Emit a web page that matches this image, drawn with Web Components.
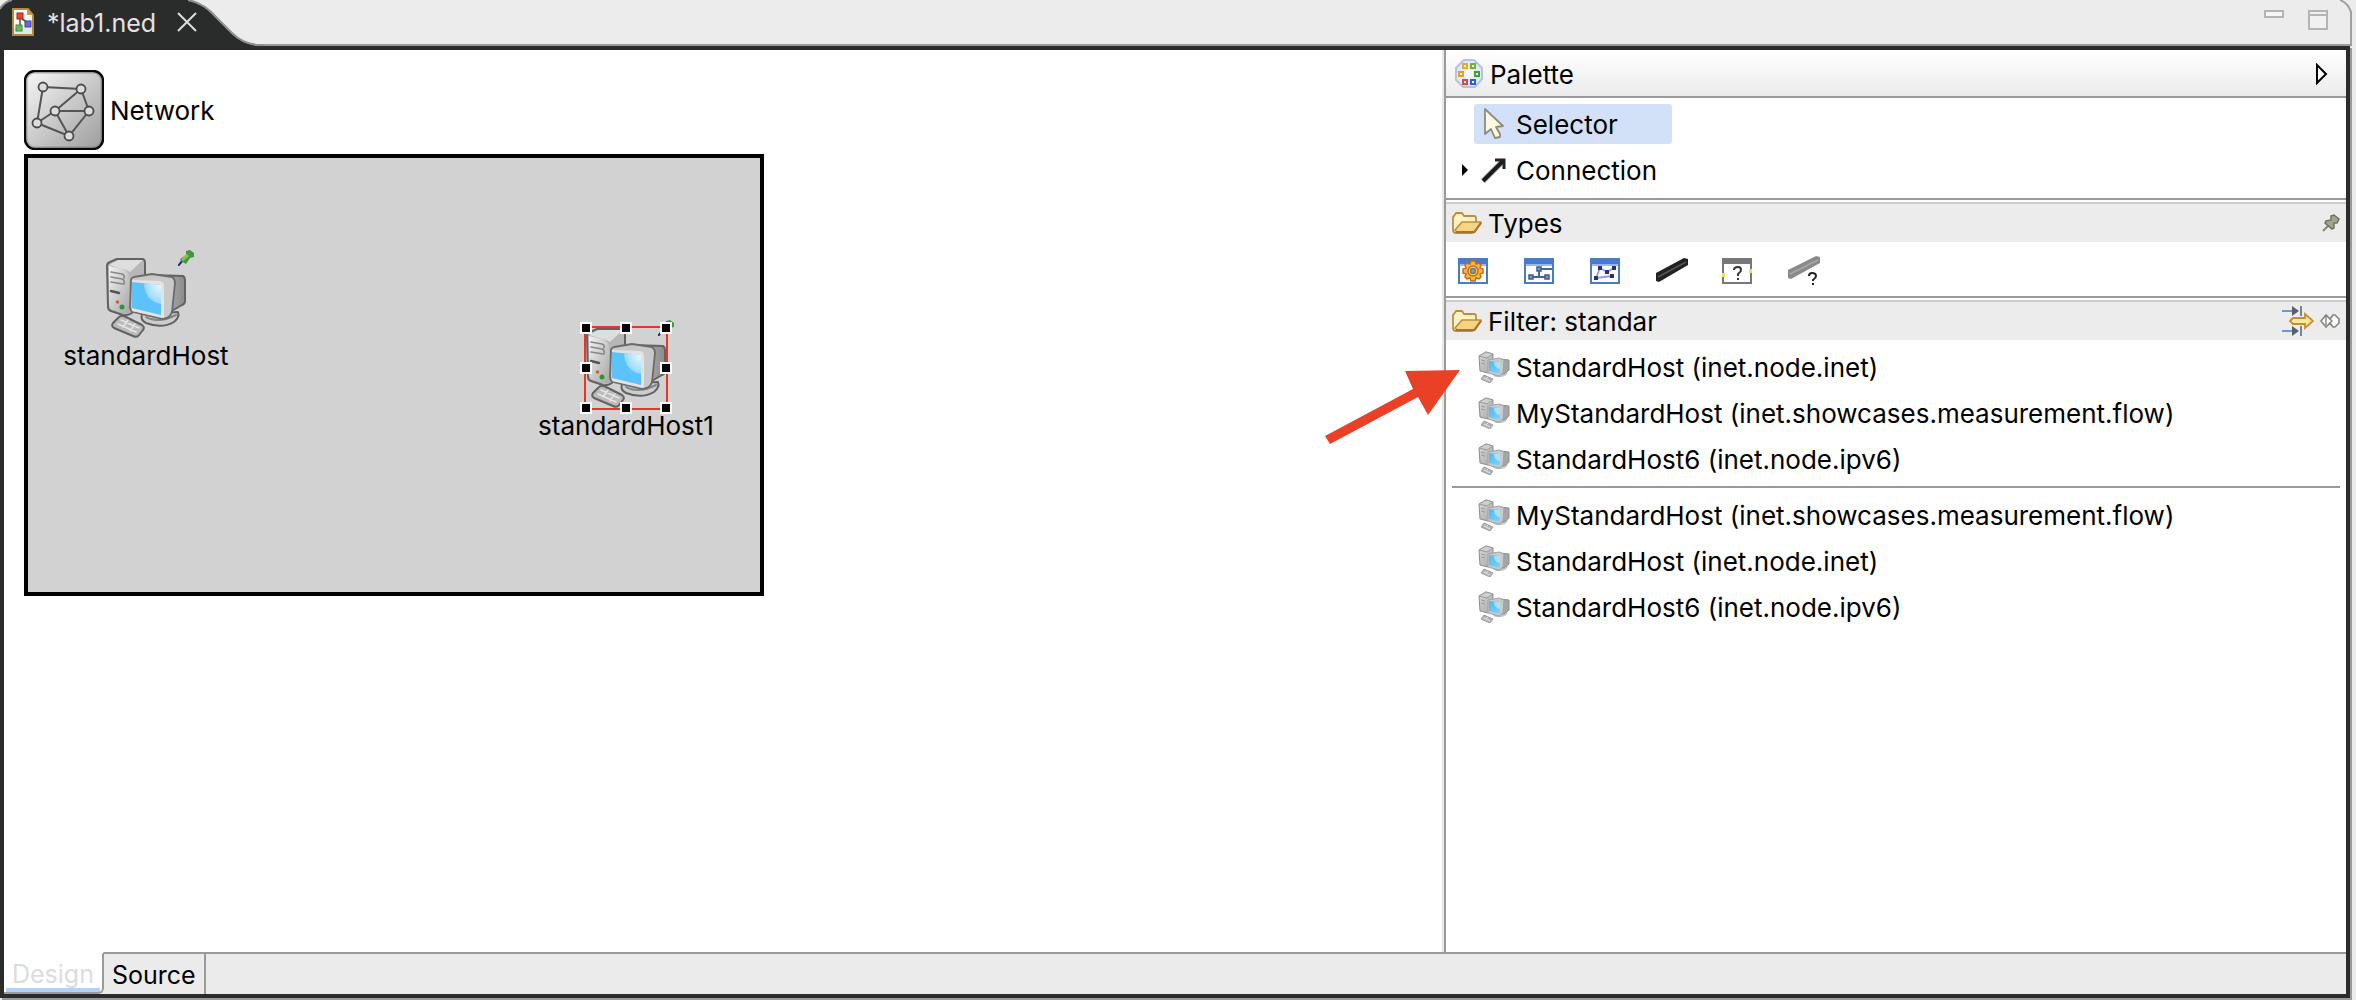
<!DOCTYPE html>
<html lang="en">
<head>
<meta charset="utf-8">
<title>lab1.ned</title>
<style>
html,body{margin:0;height:100%}
body{background:#ececec;font-family:Inter,"Liberation Sans",sans-serif;font-size:26px;line-height:32px;color:#000}
</style>
</head>
<body>
<ned-editor></ned-editor>
<script>
const computer = `
<defs>
<linearGradient id="f" x1="0" y1="0" x2="1" y2="1"><stop offset="0" stop-color="#f2f2f2"/><stop offset="1" stop-color="#a8a8a8"/></linearGradient>
<linearGradient id="s" x1="0" y1="0" x2="1" y2="0"><stop offset="0" stop-color="#c8c8c8"/><stop offset="1" stop-color="#8b8b8b"/></linearGradient>
<radialGradient id="g" cx="1" cy="0" r="1"><stop offset="0" stop-color="#f2fbff"/><stop offset="1" stop-color="#96d9fc"/></radialGradient>
</defs>
<g stroke-linejoin="round" stroke-linecap="round">
<path d="M1 8Q1 5 4 4L11 1H36Q39 1 39 5V20L26 55Q22 58 17 57L5 53Q2 52 2 49Z" fill="#b7b7b7" stroke="#626262" stroke-width="2"/>
<path d="M3 7L12 2H37L24 14Q20 11 16 11Z" fill="#dedede"/>
<path d="M3 8L16 11Q23 13 23 20V55L17 55L5 51L3 47Z" fill="url(#f)"/>
<path d="M5 14L16 16Q19 17 18 20M5 19L16 21Q19 22 18 26M5 24L17 26" fill="none" stroke="#888" stroke-width="1.6"/>
<path d="M5 33L13 35" stroke="#555" stroke-width="2.5"/>
<circle cx="11.500" cy="44" r="1.800" fill="#c5653c"/><circle cx="16" cy="49" r="2.500" fill="#329332"/>
<path d="M36 56Q34 62 40 65Q56 71 68 64Q74 59 72 54Z" fill="#cdcdcd" stroke="#626262" stroke-width="2"/>
<path d="M40 59Q52 66 70 57" fill="none" stroke="#858585" stroke-width="2"/>
<path d="M44 17L77 18Q79 19 79 22V43Q79 46 76 47L64 54Z" fill="url(#s)" stroke="#626262" stroke-width="2"/>
<path d="M25 22Q25 20 28 19L46 16L66 19Q69 21 69 25L66 54Q65 58 61 60L56 61L27 54Q24 53 24 49Z" fill="#c9c9c9" stroke="#6b6b6b" stroke-width="1.800"/>
<path d="M26 22L54 23Q58 24 58 28V60L26 53Z" fill="#e3e3e3"/>
<path d="M26 24L55 27V57L26 50Z" fill="#5cc3fa"/>
<path d="M38 25L55 27V46Q39 43 38 25Z" fill="url(#g)"/>
<path d="M12 60Q14 57 18 58L36 67Q39 69 37 72L33 77Q31 80 27 78L8 70Q5 68 7 65Z" fill="#bbb" stroke="#626262" stroke-width="2"/>
<path d="M12 66L30 74M15 62L33 70M17 69L22 62M24 73L29 66" stroke="#e6e6e6" stroke-width="1.500"/>
</g>`;
const smallComputer = `
<defs>
<linearGradient id="t" x1="0" y1="0" x2="1" y2="1"><stop offset="0" stop-color="#dcdcdc"/><stop offset="1" stop-color="#a4a4a4"/></linearGradient>
<linearGradient id="c" x1="0" y1="0" x2="1" y2="1"><stop offset="0" stop-color="#4fb8f2"/><stop offset="1" stop-color="#7fd4fb"/></linearGradient>
</defs>
<g stroke-linejoin="round">
<path d="M1 5L8 1L15 3V9L10 22L2 20Z" fill="url(#t)" stroke="#8d8d8d"/>
<path d="M1 5L8 1L15 3L9 7Z" fill="#cfcfcf" stroke="#9a9a9a"/>
<path d="M3 9L7 10M3 12L7 13" stroke="#999"/>
<path d="M14 22Q16 27 25 25Q29 24 29 21Z" fill="#d3d3d3" stroke="#b5b5b5"/>
<path d="M22 8L31 9V19L26 23H20Z" fill="#a6a6a6" stroke="#8f8f8f"/>
<path d="M10 9L21 7L26 9L25 22L21 25L10 22Z" fill="#cacaca" stroke="#a2a2a2"/>
<path d="M11 10L22 11V23L11 20Z" fill="url(#c)"/>
<path d="M16 11L22 11V18Q16 17 16 11Z" fill="#c4ebfd" opacity=".7"/>
<path d="M6 24L15 28L12 32L3 28Z" fill="#b4b4b4" stroke="#a0a0a0"/>
<path d="M6 27L12 30M8 28L10 26" stroke="#e2e2e2"/>
</g>`;
const folder = `<path d="M2 5L4 2H10L12 5H22Q24 5 24 7V12H29L23 20Q22 22 20 22H4Q1 22 1 19V6Z" fill="#fdf2c0" stroke="#be8d43" stroke-width="1.800" stroke-linejoin="round"/><path d="M3 19L10 11H29L23 21H5Z" fill="#f5d482" stroke="#be8d43" stroke-width="1.600" stroke-linejoin="round"/><path d="M29 12L22 21H4" fill="none" stroke="#a97231" stroke-width="2"/>`;
const blueWin = `<rect x="1" y="1" width="28" height="24" fill="#fdfdff" stroke="#4a7cc0" stroke-width="2"/><rect x="2" y="2" width="26" height="4" fill="#4a78d2"/><path d="M2 7H28" stroke="#9bb8e8" stroke-width="2"/>`;
const icons = {
computer:[80,80,computer],
host:[32,32,smallComputer],
file:[22,28,`<path d="M1 1H16L21 7V27H1Z" fill="#fdfbf2" stroke="#b5893a" stroke-width="2"/><path d="M15 1L21 7H15Z" fill="#c89b49"/><rect x="2" y="20" width="18" height="6" fill="#dfe7f7"/><path d="M8 10V18M10 11L15 14" stroke="#555" stroke-width="1.500"/><rect x="5" y="5" width="6" height="6" fill="#e4473a" stroke="#a2241d"/><rect x="13" y="13" width="6" height="6" fill="#6868e0" stroke="#3c3ca5"/><rect x="4" y="17" width="6" height="6" fill="#68bd63" stroke="#398c3a"/>`],
close:[20,20,`<path d="M1 1L19 19M19 1L1 19" stroke="#ddd" stroke-width="2"/>`],
min:[20,8,`<rect x="1" y="1" width="18" height="6" fill="#f6f6f6" stroke="#b4b4b4" stroke-width="2"/>`],
max:[20,20,`<path d="M1 1H19V19H1ZM1 5H19" fill="#f1f1f1" stroke="#b4b4b4" stroke-width="2"/>`],
network:[80,80,`<defs><linearGradient id="n" x1="0" y1="0" x2="1" y2="1"><stop offset="0" stop-color="#f8f8f8"/><stop offset="1" stop-color="#9c9c9c"/></linearGradient></defs><rect x="1" y="1" width="78" height="78" rx="10" fill="url(#n)" stroke="#080808" stroke-width="2.500"/><rect x="3" y="3" width="74" height="74" rx="8" fill="none" stroke="#777" stroke-opacity=".4" stroke-width="1.500"/><path d="M19 17L57 19L65 41L45 66L13 53L19 17M57 19L31 41L65 41M31 41L13 53M31 41L45 66" fill="none" stroke="#555" stroke-width="2"/><g fill="#ddd" stroke="#4c4c4c" stroke-width="1.800"><circle cx="19" cy="17" r="4.500"/><circle cx="57" cy="19" r="4.500"/><circle cx="65" cy="41" r="4.500"/><circle cx="31" cy="41" r="4.500"/><circle cx="13" cy="53" r="4.500"/><circle cx="45" cy="66" r="4.500"/></g>`],
greenpin:[16,16,`<path d="M0 16L5 10" stroke="#1b2f70" stroke-width="2"/><path d="M8 1L12 0L16 3V7L12 8L8 14L3 11L2 9L8 5Z" fill="#3e9a3f"/><path d="M4 10L10 5" stroke="#93ba58" stroke-width="3"/>`],
palette:[30,30,`<path d="M10 1H20L28 9V20L21 28H9L2 21V9Z" fill="#e3eaf6" stroke="#b4c3e1" stroke-width="2" stroke-linejoin="round"/><circle cx="15" cy="15" r="5" fill="#f6f8fc"/><g fill="#fff" stroke-width="2"><rect x="9" y="5" width="4" height="4" stroke="#efa928"/><rect x="17" y="5" width="4" height="4" stroke="#6fb33a"/><rect x="5" y="13" width="4" height="4" stroke="#ee9a24"/><rect x="21" y="13" width="4" height="4" stroke="#3aa233"/><rect x="9" y="21" width="4" height="4" stroke="#d1484d"/><rect x="17" y="21" width="4" height="4" stroke="#2b5fe0"/></g>`],
tri:[12,22,`<path d="M1 2V20L10 11Z" fill="#fff" stroke="#000" stroke-width="2"/>`],
cursor:[22,32,`<path d="M2 1V26L8 21L12 30L17 29L17 26L13 19L20 18Z" fill="#fdf9e0" stroke="#8d8a7c" stroke-width="1.800" stroke-linejoin="round"/>`],
conn:[26,26,`<path d="M2 24L21 5" stroke="#555" stroke-opacity=".35" stroke-width="6"/><path d="M2 24L22 4" stroke="#1b1b1b" stroke-width="4"/><path d="M14 3H23V12" fill="none" stroke="#222" stroke-width="3"/>`],
expand:[6,12,`<path d="M0 0L6 6L0 12Z"/>`],
folder:[30,24,folder],
pin:[18,18,`<path d="M1 17L7 11" stroke="#888878" stroke-width="2"/><path d="M9 2L12 1L17 5L15 9L12 9L12 14L10 15L3 9L4 7L9 6Z" fill="#a4a490" stroke="#727268" stroke-width="1.500"/>`],
simple:[30,26,blueWin+`<g transform="translate(15 13)" stroke="#c56a23" stroke-width="1.500" fill="#f7b842"><path d="M-2 -10H2L3 -7L6 -8L8 -6L7 -3L10 -2V2L7 3L8 6L6 8L3 7L2 10H-2L-3 7L-6 8L-8 6L-7 3L-10 2V-2L-7 -3L-8 -6L-6 -8L-3 -7Z"/><circle r="5" fill="#ffe04b"/><circle r="2.500" fill="#999" stroke="#777"/></g>`],
compound:[30,26,blueWin+`<path d="M15 11H28M15 11V19M8 19H22" stroke="#45679f" stroke-width="2" fill="none"/><g fill="#8298bf" stroke="#3d5d94" stroke-width="1.500"><rect x="13" y="9" width="4" height="4"/><rect x="5" y="17" width="4" height="4"/><rect x="21" y="17" width="4" height="4"/></g>`],
net:[30,26,blueWin+`<path d="M6 20L10 10L17 14L24 10M6 20L22 18" stroke="#9696f5" stroke-width="1.800" fill="none"/><g fill="#27336b"><rect x="8" y="8" width="4" height="4"/><rect x="22" y="8" width="4" height="4"/><rect x="15" y="12" width="4" height="4"/><rect x="4" y="18" width="4" height="4"/><rect x="20" y="16" width="4" height="4"/></g>`],
channel:[32,26,`<path d="M0 15L28 0L32 1V7L3 24L0 23Z" fill="#222"/><path d="M2 19L30 4" stroke="#555" stroke-width="1.500"/>`],
iface:[30,26,`<rect x="1" y="1" width="28" height="24" fill="#fff" stroke="#777" stroke-width="2"/><rect x="1" y="1" width="28" height="5" fill="#777"/><path d="M0 15H3V19H0ZM27 11H30V15H27Z" fill="#f2e34b"/><path d="M12 12Q12 9 16 9Q19 9 19 12Q19 14 16 16V18M16 20V22" fill="none" stroke="#333" stroke-width="2"/>`],
chiface:[32,30,`<path d="M0 14L28 0L32 1V7L3 23L0 22Z" fill="#8a8a8a"/><path d="M2 18L30 4" stroke="#aaa" stroke-width="1.500"/><path d="M21 20Q21 17 24 17Q28 17 28 20Q28 22 25 24V25M25 27V29" fill="none" stroke="#222" stroke-width="2"/>`],
filter:[32,32,`<path d="M0 6H12M0 26H12" stroke="#6b9bcc" stroke-width="2"/><path d="M10 1L17 6L10 11ZM10 21L17 26L10 31Z" fill="#566170"/><path d="M19 1V11M19 21V31" stroke="#7883a0" stroke-width="2"/><path d="M8 16L11 13H23V9L31 16L23 23V19H11Z" fill="#ffe9a2" stroke="#c58f2d" stroke-width="1.800"/>`],
unpin:[20,16,`<path d="M1 8L6 2L10 6L13 2H15L19 6V10L15 14H13L10 10L6 14Z" fill="#fbfbfb" stroke="#85857f" stroke-width="1.600"/><path d="M6 4V12M10 6L12 8L10 10" fill="none" stroke="#85857f" stroke-width="1.400"/>`]
};
function define(name, markup, setup){
  customElements.define(name, class extends HTMLElement{
    constructor(){
      super();
      this.attachShadow({mode:"open"}).innerHTML = markup;
    }
    connectedCallback(){ if(setup) setup.call(this, this.shadowRoot); }
  });
}
const base = `*{box-sizing:border-box}button{font:inherit;color:inherit;background:none;border:0;margin:0;padding:0;display:flex;align-items:center;text-align:left;white-space:nowrap}.text{padding-top:2px}`;

define("ned-icon", "", function(root){
  const [w,h,body] = icons[this.getAttribute("name")];
  root.innerHTML = `<style>:host{display:block;flex:none}svg{display:block}</style><svg aria-hidden="true" width="${w}" height="${h}" viewBox="0 0 ${w} ${h}">${body}</svg>`;
});

define("editor-tabs", `<style>${base}
:host{display:flex;height:46px;box-sizing:border-box;justify-content:space-between;border-bottom:2px solid #9a9a9a;background:#ececec}
.tab{position:relative;display:flex;width:256px;height:44px;color:#e2e2e2;isolation:isolate;font-size:25px}
.shape{position:absolute;left:0;top:0;z-index:-1}
.name{padding-left:12px;gap:13px}
.close{margin-left:21px}
.win{display:flex;align-items:flex-start}
.win button{padding-top:10px}
.win .max{margin-left:24px;margin-right:12px}
.edge{display:block;width:12px;height:44px}
</style>
<div class="tab"><svg class="shape" width="264" height="46" aria-hidden="true"><path d="M0 46V9Q4 2 12 0H188Q204 4 216 18L232 34Q242 43 256 44H264V46Z" fill="#2a2b2b"/><path d="M0 9Q4 2 12 0M188 0Q204 3 216 17L232 33Q242 43 256 45H264" fill="none" stroke="#8f8f8f" stroke-width="2"/></svg>
<button class="name"><ned-icon name="file"></ned-icon><span class="text">*lab1.ned</span></button><button class="close" aria-label="Close"><ned-icon name="close"></ned-icon></button></div>
<div class="win"><button aria-label="Minimize"><ned-icon name="min"></ned-icon></button><button class="max" aria-label="Maximize"><ned-icon name="max"></ned-icon></button>
<svg class="edge" aria-hidden="true"><path d="M0 0Q8 3 11 12V44" fill="none" stroke="#a0a0a0" stroke-width="2"/></svg></div>`);

define("ned-node", `<style>${base}
:host{position:absolute;display:flex;flex-direction:column;align-items:center;width:200px}
.pic{position:relative}
.pin{position:absolute;left:72px;top:-8px}
.sel{position:absolute;left:-2px;top:-2px;overflow:visible;display:none}
:host([selected]) .sel{display:block}
.label{white-space:nowrap;padding-top:2px}
</style>
<div class="pic"><ned-icon name="computer"></ned-icon><ned-icon class="pin" name="greenpin"></ned-icon>
<svg class="sel" width="84" height="84" aria-hidden="true"><rect x="1" y="1" width="82" height="82" fill="none" stroke="#eb3423" stroke-width="2"/><g fill="#000" stroke="#fff" stroke-width="2"><rect x="-3" y="-3" width="10" height="10"/><rect x="37" y="-3" width="10" height="10"/><rect x="77" y="-3" width="10" height="10"/><rect x="-3" y="37" width="10" height="10"/><rect x="77" y="37" width="10" height="10"/><rect x="-3" y="77" width="10" height="10"/><rect x="37" y="77" width="10" height="10"/><rect x="77" y="77" width="10" height="10"/></g></svg></div>
<div class="label"><slot></slot></div>`);

define("ned-canvas", `<style>${base}
:host{display:block;background:#fff}
.page{padding:20px}
.title{display:flex;align-items:center;gap:6px}
.frame{position:relative;width:740px;height:442px;margin-top:4px;border:4px solid #000;background:#d2d2d2}
.a{left:18px;top:100px}.b{left:498px;top:170px}
</style>
<div class="page"><div class="title"><ned-icon name="network"></ned-icon><span class="text">Network</span></div>
<div class="frame"><ned-node class="a">standardHost</ned-node><ned-node class="b" selected>standardHost1</ned-node></div></div>`);

define("palette-item", `<style>${base}
:host{display:flex;height:46px;align-items:center;padding-left:28px}
button{height:40px;border-radius:3px;padding-left:4px}
:host([active]) button{background:#d3e1f8;min-width:198px}
.ic{width:32px;display:flex;justify-content:center;margin-right:6px}
.ex{display:none;width:6px;margin-left:-12px;margin-right:6px}
:host([expandable]) .ex{display:block}
</style><ned-icon class="ex" name="expand"></ned-icon><button><span class="ic"></span><span class="text"><slot></slot></span></button>`, function(root){
  root.querySelector(".ic").innerHTML = `<ned-icon name="${this.getAttribute("icon")}"></ned-icon>`;
});

define("palette-drawer", `<style>${base}
:host{display:block;border-top:2px solid #9a9a9a}
.head{display:flex;align-items:center;justify-content:space-between;height:40px;margin-top:2px;border-top:2px solid #ccc;background:#ececec;padding:0 6px}
.head button{gap:6px}
.tools{display:flex;align-items:center;gap:6px}
</style><div class="head"><button><ned-icon name="folder"></ned-icon><span class="text"><slot name="title"></slot></span></button><div class="tools"><slot name="tools"></slot></div></div><slot></slot>`);

define("ned-palette", `<style>${base}
:host{display:block;background:#fff;border-left:2px solid #9a9a9a;box-shadow:-2px 0 #e8e8e8}
.top{display:flex;justify-content:space-between;align-items:center;height:48px;padding:2px 18px 0 8px;background:linear-gradient(#fff,#ebebeb);border-bottom:2px solid #9a9a9a}
.top .name{display:flex;align-items:center;gap:6px}
.group{padding:3px 0 5px}
.types{display:flex;height:54px;align-items:center;padding:4px 0 0 12px}
.types button{width:66px;height:40px}
.list{padding-top:4px}
hr{margin:4px 6px;border:0;border-top:2px solid #9a9a9a}
</style>
<div class="top"><span class="name"><ned-icon name="palette"></ned-icon><span class="text">Palette</span></span><button aria-label="Collapse palette"><ned-icon name="tri"></ned-icon></button></div>
<div class="group"><palette-item icon="cursor" active>Selector</palette-item><palette-item icon="conn" expandable>Connection</palette-item></div>
<palette-drawer><span slot="title">Types</span><button slot="tools" aria-label="Pin"><ned-icon name="pin"></ned-icon></button>
<div class="types"><button aria-label="Simple module"><ned-icon name="simple"></ned-icon></button><button aria-label="Module"><ned-icon name="compound"></ned-icon></button><button aria-label="Network"><ned-icon name="net"></ned-icon></button><button aria-label="Channel"><ned-icon name="channel"></ned-icon></button><button aria-label="Module interface"><ned-icon name="iface"></ned-icon></button><button aria-label="Channel interface"><ned-icon name="chiface"></ned-icon></button></div></palette-drawer>
<palette-drawer><span slot="title">Filter: standar</span><button slot="tools" aria-label="Filter"><ned-icon name="filter"></ned-icon></button><button slot="tools" aria-label="Unpin"><ned-icon name="unpin"></ned-icon></button>
<div class="list"><palette-item icon="host">StandardHost (inet.node.inet)</palette-item><palette-item icon="host">MyStandardHost (inet.showcases.measurement.flow)</palette-item><palette-item icon="host">StandardHost6 (inet.node.ipv6)</palette-item><hr><palette-item icon="host">MyStandardHost (inet.showcases.measurement.flow)</palette-item><palette-item icon="host">StandardHost (inet.node.inet)</palette-item><palette-item icon="host">StandardHost6 (inet.node.ipv6)</palette-item></div></palette-drawer>`);

define("page-tabs", `<style>${base}
:host{display:flex;height:42px;background:#ebebeb;font-size:25px}
button{height:42px;border-top:2px solid #9a9a9a;border-right:2px solid #9a9a9a;padding:0 8px}
.on{background:linear-gradient(#b3d0fa,#b3d0fa) 2px 36px/calc(100% - 6px) 4px no-repeat #fff;color:#dcdcdc;border-top-color:#fff;border-bottom:2px solid #9a9a9a;border-bottom-right-radius:6px;background-origin:border-box}
.rest{flex:1;border-top:2px solid #9a9a9a}
</style><button class="on"><span class="text">Design</span></button><button><span class="text">Source</span></button><div class="rest"></div>`);

define("ned-editor", `<style>${base}
:host{display:flex;flex-direction:column;min-height:100vh;padding-right:4px;box-sizing:border-box}
.frame{flex:1;display:flex;flex-direction:column;border:4px solid #2a2b2b;box-shadow:2px 2px #9a9a9a;margin:0 2px 2px 0}
.body{flex:1;display:flex}
ned-canvas{flex:1440 1 0}
.right{position:relative;display:flex;flex:902 1 0}
.right ned-palette{flex:1}
.arrow{position:absolute;left:-120px;top:318px}
</style><editor-tabs></editor-tabs><div class="frame"><div class="body"><ned-canvas></ned-canvas><div class="right"><ned-palette></ned-palette><svg class="arrow" width="136" height="78" aria-hidden="true"><path d="M1 68L89 21L81 3L136 2L104 47L94 29L6 76Z" fill="#ea4025"/></svg></div></div><page-tabs></page-tabs></div>`);
</script>
</body>
</html>
